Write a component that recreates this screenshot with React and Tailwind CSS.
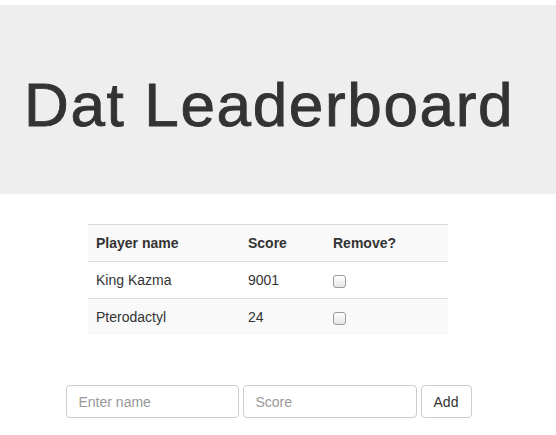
import { useState } from 'react';

const players = [
  { name: 'King Kazma', score: 9001 },
  { name: 'Pterodactyl', score: 24 },
];

export default function App() {
  const [name, setName] = useState('');
  const [score, setScore] = useState('');

  return (
    <div className="min-h-screen bg-white pt-[5px] text-[14px] leading-5 text-[#333] font-['Liberation_Sans',Helvetica,Arial,sans-serif]">
      {/* jumbotron */}
      <div className="h-[189px] bg-[#eeeeee] flex items-center pl-[24px]">
        <h1 className="text-[62px] leading-none mt-[10px] font-normal tracking-[1.65px] [-webkit-text-stroke:0.9px_#333]">Dat Leaderboard</h1>
      </div>

      <div className="w-[536px] flex flex-col items-center">
        <table className="mt-[30px] w-[360px] border-collapse">
          <tbody>
            <tr className="bg-[#f9f9f9] border-t border-[#dddddd]">
              <th className="w-[152px] p-2 text-left font-bold">Player name</th>
              <th className="w-[85px] p-2 text-left font-bold">Score</th>
              <th className="p-2 text-left font-bold">Remove?</th>
            </tr>
            {players.map((p, i) => (
              <tr key={p.name} className={`border-t border-[#dddddd] ${i % 2 ? 'bg-[#f9f9f9]' : 'bg-white'}`}>
                <td className="p-2">{p.name}</td>
                <td className="p-2">{p.score}</td>
                <td className="p-2">
                  <input
                    type="checkbox"
                    className="appearance-none block mt-[2px] w-[13px] h-[13px] rounded-[3px] border border-[#9a9a9a] bg-gradient-to-b from-white to-[#e6e6e6]"
                  />
                </td>
              </tr>
            ))}
          </tbody>
        </table>

        <div className="mt-[50px] ml-[1px] flex gap-[4px]">
          <input
            value={name}
            onChange={(e) => setName(e.target.value)}
            placeholder="Enter name"
            className="w-[173px] h-[33px] px-3 rounded border border-[#cccccc] placeholder:text-[#999] outline-none"
          />
          <input
            value={score}
            onChange={(e) => setScore(e.target.value)}
            placeholder="Score"
            className="w-[174px] h-[33px] px-3 rounded border border-[#cccccc] placeholder:text-[#999] outline-none"
          />
          <button className="w-[51px] h-[33px] rounded border border-[#cccccc] bg-white text-[#333]">Add</button>
        </div>
      </div>
    </div>
  );
}
